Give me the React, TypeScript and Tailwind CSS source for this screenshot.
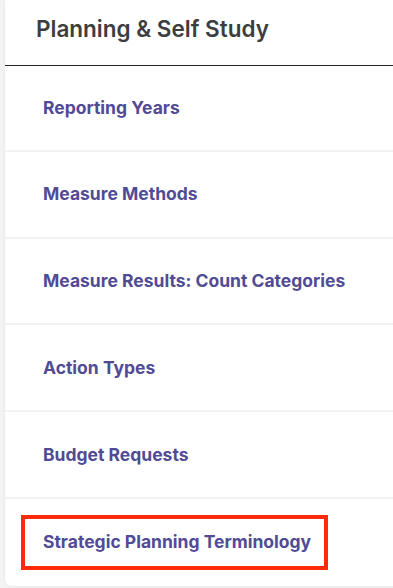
import React from "react";

const items = [
  "Reporting Years",
  "Measure Methods",
  "Measure Results: Count Categories",
  "Action Types",
  "Budget Requests",
  "Strategic Planning Terminology",
];

export default function App() {
  return (
    <div className="w-[393px] h-[588px] bg-[#f3f3f3] overflow-hidden" style={{ fontFamily: "Inter, 'Noto Sans', sans-serif" }}>
      <div className="ml-[5px] w-[400px] h-[586px] bg-white rounded-bl-[7px] shadow-[0_0_3px_rgba(0,0,0,0.08)] flex flex-col">
        <div className="h-[66px] flex items-center pl-[31px] pb-[7px] border-b border-[#2a2038]">
          <span className="text-[22.5px] font-semibold text-[#3d3d3d]">Planning &amp; Self Study</span>
        </div>
        {items.map((t, i) => (
          <div
            key={t}
            className={`flex items-center pl-[38px] ${i < items.length - 1 ? "border-b-2 border-[#f2f2f2]" : ""} ${i === 0 ? "h-[86px]" : "h-[87px]"}`}
          >
            {i === items.length - 1 ? (
              <div className="-ml-[22px] w-[307px] h-[55px] border-4 border-[#ff2a0a] flex items-center pl-[18px]">
                <span className="text-[17.5px] font-bold text-[#514b95]">{t}</span>
              </div>
            ) : (
              <span className="text-[17.5px] font-bold text-[#514b95]">{t}</span>
            )}
          </div>
        ))}
      </div>
    </div>
  );
}
